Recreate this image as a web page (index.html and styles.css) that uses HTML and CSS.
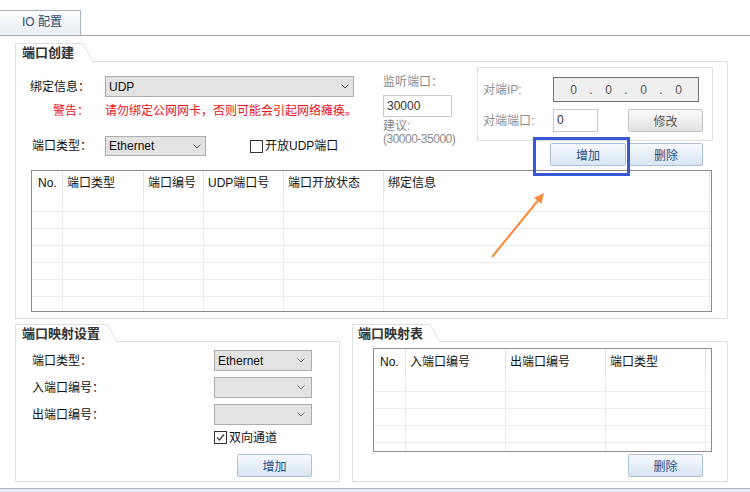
FILE: index.html
```html
<!DOCTYPE html>
<html lang="zh-CN">
<head>
<meta charset="utf-8">
<title>IO 配置</title>
<link rel="stylesheet" href="styles.css">
</head>
<body>
<div class="tabs"><div class="tab">IO 配置</div></div>

<div class="content">
  <section class="group g-create">
    <div class="ghead">
      <span class="gtitle">端口创建</span>
      <svg class="gslant" width="10" height="19" viewBox="0 0 10 19"><line x1="0" y1="0" x2="10" y2="19"/></svg>
      <span class="gline"></span>
    </div>
    <div class="gbody">
      <div class="create-top">
        <div class="col-bind">
          <div class="row r-bind">
            <span class="lbl">绑定信息：</span>
            <div class="sel s-bind"><span>UDP</span><svg class="chev" width="8" height="5" viewBox="0 0 8 5"><path d="M0.5 0.5 L4 4 L7.5 0.5"/></svg></div>
          </div>
          <div class="row r-warn">
            <span class="lbl warn">警告：</span>
            <span class="warn">请勿绑定公网网卡，否则可能会引起网络瘫痪。</span>
          </div>
          <div class="row r-type">
            <span class="lbl">端口类型：</span>
            <div class="sel s-type"><span>Ethernet</span><svg class="chev" width="8" height="5" viewBox="0 0 8 5"><path d="M0.5 0.5 L4 4 L7.5 0.5"/></svg></div>
            <span class="chk"><span class="box"></span>开放UDP端口</span>
          </div>
        </div>
        <div class="col-listen">
          <div class="muted">监听端口：</div>
          <div class="inp i-listen">30000</div>
          <div class="muted hint">建议:<br><span class="range">(30000-35000)</span></div>
        </div>
        <div class="col-peer">
          <div class="peer-box">
            <div class="prow">
              <span class="plbl">对端IP:</span>
              <div class="ip"><span class="seg">0</span><span class="dot">.</span><span class="seg">0</span><span class="dot">.</span><span class="seg">0</span><span class="dot">.</span><span class="seg">0</span></div>
            </div>
            <div class="prow p2">
              <span class="plbl">对端端口:</span>
              <div class="inp i-port">0</div>
              <button class="btn gray b-edit">修改</button>
            </div>
          </div>
          <div class="btn-row">
            <button class="btn blue b-add">增加</button>
            <button class="btn blue b-del">删除</button>
          </div>
        </div>
      </div>

      <div class="tbl t-ports">
        <div class="tr th"><span class="no">No.</span><span>端口类型</span><span>端口编号</span><span>UDP端口号</span><span>端口开放状态</span><span>绑定信息</span><span></span></div>
        <div class="tr"><span></span><span></span><span></span><span></span><span></span><span></span><span></span></div>
        <div class="tr"><span></span><span></span><span></span><span></span><span></span><span></span><span></span></div>
        <div class="tr"><span></span><span></span><span></span><span></span><span></span><span></span><span></span></div>
        <div class="tr"><span></span><span></span><span></span><span></span><span></span><span></span><span></span></div>
        <div class="tr"><span></span><span></span><span></span><span></span><span></span><span></span><span></span></div>
        <div class="tr"><span></span><span></span><span></span><span></span><span></span><span></span><span></span></div>
        <div class="tr"><span></span><span></span><span></span><span></span><span></span><span></span><span></span></div>
      </div>
    </div>
  </section>

  <div class="bottom">
    <section class="group g-map">
      <div class="ghead">
        <span class="gtitle">端口映射设置</span>
        <svg class="gslant" width="10" height="18" viewBox="0 0 10 18"><line x1="0" y1="0" x2="10" y2="18"/></svg>
        <span class="gline"></span>
      </div>
      <div class="gbody map-body">
        <div class="mrow">
          <span class="lbl">端口类型：</span>
          <div class="sel s-map"><span>Ethernet</span><svg class="chev" width="8" height="5" viewBox="0 0 8 5"><path d="M0.5 0.5 L4 4 L7.5 0.5"/></svg></div>
        </div>
        <div class="mrow">
          <span class="lbl">入端口编号：</span>
          <div class="sel s-map"><span></span><svg class="chev" width="8" height="5" viewBox="0 0 8 5"><path d="M0.5 0.5 L4 4 L7.5 0.5"/></svg></div>
        </div>
        <div class="mrow">
          <span class="lbl">出端口编号：</span>
          <div class="sel s-map"><span></span><svg class="chev" width="8" height="5" viewBox="0 0 8 5"><path d="M0.5 0.5 L4 4 L7.5 0.5"/></svg></div>
        </div>
        <div class="mchk">
          <span class="box checked"><svg width="11" height="11" viewBox="0 0 11 11"><path d="M2 5.5 L4.5 8 L9 2.5"/></svg></span>双向通道
        </div>
        <button class="btn blue b-madd">增加</button>
      </div>
    </section>

    <section class="group g-list">
      <div class="ghead">
        <span class="gtitle">端口映射表</span>
        <svg class="gslant" width="10" height="18" viewBox="0 0 10 18"><line x1="0" y1="0" x2="10" y2="18"/></svg>
        <span class="gline"></span>
      </div>
      <div class="gbody list-body">
        <div class="tbl t-map">
          <div class="tr th"><span class="no">No.</span><span>入端口编号</span><span>出端口编号</span><span>端口类型</span><span></span></div>
          <div class="tr"><span></span><span></span><span></span><span></span><span></span></div>
          <div class="tr"><span></span><span></span><span></span><span></span><span></span></div>
          <div class="tr"><span></span><span></span><span></span><span></span><span></span></div>
          <div class="tr"><span></span><span></span><span></span><span></span><span></span></div>
          <div class="tr"><span></span><span></span><span></span><span></span><span></span></div>
        </div>
        <div class="list-actions"><button class="btn blue b-ldel">删除</button></div>
      </div>
    </section>
  </div>
</div>

<div class="statusbar"></div>

<div class="highlight"></div>
<svg class="arrow" width="70" height="80" viewBox="0 0 70 80">
  <line x1="7" y1="72" x2="53" y2="15.5"/>
  <polygon points="59,8 56.4,18.8 49,12.8"/>
</svg>
</body>
</html>
```

FILE: styles.css
```css
* { box-sizing: border-box; }

body {
  margin: 0;
  width: 750px;
  height: 492px;
  overflow: hidden;
  position: relative;
  background: #fff;
  font-family: "Liberation Sans", "Noto Sans CJK SC", sans-serif;
  font-size: 12px;
  line-height: 16px;
  color: #111;
}

/* top tab strip */
.tabs {
  height: 36px;
  padding-top: 10px;
  border-bottom: 1px solid #a9a9a9;
}
.tab {
  width: 81px;
  height: 25px;
  border-top: 1px solid #aab4c1;
  border-right: 1px solid #aab4c1;
  background: linear-gradient(#fdfeff, #e8eef5);
  color: #2b4c6f;
  padding-left: 22px;
  line-height: 23px;
}

.content { padding: 7px 0 0 15px; }

/* group boxes */
.group {
  display: flex;
  flex-direction: column;
  border-left: 1px solid #dfdfdf;
}
.ghead { display: flex; height: 18px; flex: none; }
.g-create .ghead { height: 19px; }
.gtitle {
  border-top: 1px solid #dfdfdf;
  padding-left: 6px;
  font-size: 13px;
  font-weight: bold;
  color: #333;
  line-height: 17px;
  white-space: nowrap;
}
.g-create .gtitle { width: 67px; }
.g-map .gtitle { width: 91px; }
.g-list .gtitle { width: 77px; padding-left: 5px; }
.gslant { flex: none; display: block; }
.gslant line { stroke: #dfdfdf; stroke-width: 1; }
.gline { flex: 1; border-bottom: 1px solid #dfdfdf; }
.gbody {
  flex: 1;
  border-right: 1px solid #dfdfdf;
  border-bottom: 1px solid #dfdfdf;
}

.g-create { width: 713px; height: 276px; }
.g-create .gbody { padding-bottom: 6px; }

/* top form area */
.create-top {
  display: grid;
  grid-template-columns: 367px 94px 236px;
  height: 108px;
}
.col-bind { padding-top: 14px; }
.row { display: flex; align-items: center; }
.r-bind { height: 21px; }
.r-bind .lbl { width: 89px; padding-left: 14px; }
.r-warn { height: 16px; margin-top: 6px; }
.r-warn .lbl { width: 89px; text-align: right; padding-right: 16px; }
.warn { color: #e8151b; white-space: nowrap; }
.r-type { height: 20px; margin-top: 17px; }
.r-type .lbl { width: 89px; padding-left: 16px; }

.sel {
  display: flex;
  align-items: center;
  justify-content: space-between;
  padding: 0 4px 0 3px;
  background: #e3e3e3;
  border: 1px solid #acacac;
  color: #111;
}
.chev { display: block; flex: none; }
.chev path { fill: none; stroke: #5a5a5a; stroke-width: 1; }
.s-bind { width: 249px; height: 21px; }
.s-type { width: 101px; height: 20px; }

.chk { display: flex; align-items: center; margin-left: 44px; }
.box {
  width: 13px;
  height: 13px;
  border: 1px solid #333;
  background: #fff;
  margin-right: 2px;
  display: flex;
  align-items: center;
  justify-content: center;
  flex: none;
}
.box svg path { fill: none; stroke: #444; stroke-width: 1.3; }

.col-listen { padding-top: 12px; }
.muted { color: #8a8a8a; }
.inp {
  height: 22px;
  border: 1px solid #c9c9c9;
  background: #fff;
  padding-left: 3px;
  line-height: 20px;
  color: #333;
}
.i-listen { width: 69px; margin-top: 5px; }
.hint { margin-top: 3px; line-height: 13px; }
.range { letter-spacing: -0.5px; white-space: nowrap; }

.col-peer { padding-top: 5px; }
.peer-box {
  width: 236px;
  height: 74px;
  border: 1px solid #e0e0e0;
  padding: 9px 0 0 5px;
}
.prow { display: flex; align-items: center; }
.p2 { margin-top: 7px; }
.plbl { width: 70px; color: #8e8e8e; }
.ip {
  width: 146px;
  height: 25px;
  border: 1px solid #707070;
  background: #efefef;
  display: flex;
  align-items: center;
  padding-left: 2px;
  color: #555;
}
.seg { width: 35px; text-align: center; }
.dot { width: 0; display: flex; justify-content: center; }
.i-port { width: 45px; height: 23px; }

.btn {
  font-family: inherit;
  font-size: 12px;
  height: 23px;
  padding: 0;
  border-radius: 2px;
  cursor: default;
}
.btn.blue {
  border: 1px solid #adbfd5;
  background: linear-gradient(#f6f9fd, #d8e5f3);
  color: #1d4d8c;
}
.btn.gray {
  border: 1px solid #c4c4c4;
  background: linear-gradient(#fbfbfb, #e2e2e2);
  color: #5a5a5a;
}
.b-edit { width: 75px; margin-left: 30px; }
.btn-row {
  display: flex;
  justify-content: flex-end;
  gap: 3px;
  margin-top: 2px;
  padding-right: 10px;
}
.b-add { width: 76px; }
.b-del { width: 74px; }

/* grid tables */
.tbl {
  border: 1px solid #8b8b8b;
  overflow: hidden;
  display: flex;
  flex-direction: column;
  background: #fff;
}
.tr { display: grid; flex: none; height: 17px; border-bottom: 1px solid #ececec; }
.tr > span { border-right: 1px solid #ececec; white-space: nowrap; }
.tr > span:last-child { border-right: none; }
.th { border-bottom: none; }
.th > span { padding-left: 4px; border-right-color: #e3e3e3; }
.th > .no { padding-left: 6px; }

.t-ports { width: 681px; height: 142px; margin-left: 15px; }
.t-ports .tr { grid-template-columns: 31px 81px 60px 80px 100px 326px 1fr; }
.t-ports .th { height: 24px; line-height: 24px; }

/* bottom groups */
.bottom { display: flex; gap: 12px; margin-top: 5px; }
.g-map { width: 325px; height: 158px; }
.g-list { width: 376px; height: 158px; }

.map-body { padding: 8px 0 0 16px; }
.mrow { display: flex; align-items: center; height: 21px; margin-bottom: 6px; }
.mrow .lbl { width: 182px; }
.s-map { width: 98px; height: 21px; padding-right: 6px; }
.s-map .chev path { stroke: #777; }
.mchk { display: flex; align-items: center; height: 13px; margin-left: 182px; }
.b-madd { display: block; width: 75px; margin: 10px 0 0 205px; }

.list-body { padding: 6px 0 0 20px; }
.t-map { width: 339px; height: 104px; }
.t-map .tr { grid-template-columns: 32px 100px 100px 100px 1fr; }
.t-map .th { height: 26px; line-height: 26px; }
.list-actions { display: flex; justify-content: flex-end; margin-top: 2px; padding-right: 24px; }
.b-ldel { width: 75px; }

.statusbar {
  margin-top: 6px;
  height: 4px;
  border-top: 1px solid #a7b2c2;
  background: #e8eef8;
}

/* annotation overlays */
.highlight {
  position: absolute;
  left: 533px;
  top: 137px;
  width: 97px;
  height: 39px;
  border: 3px solid #3858d6;
}
.arrow { position: absolute; left: 485px; top: 185px; }
.arrow line { stroke: #f68a3a; stroke-width: 2; }
.arrow polygon { fill: #f68a3a; }
```
